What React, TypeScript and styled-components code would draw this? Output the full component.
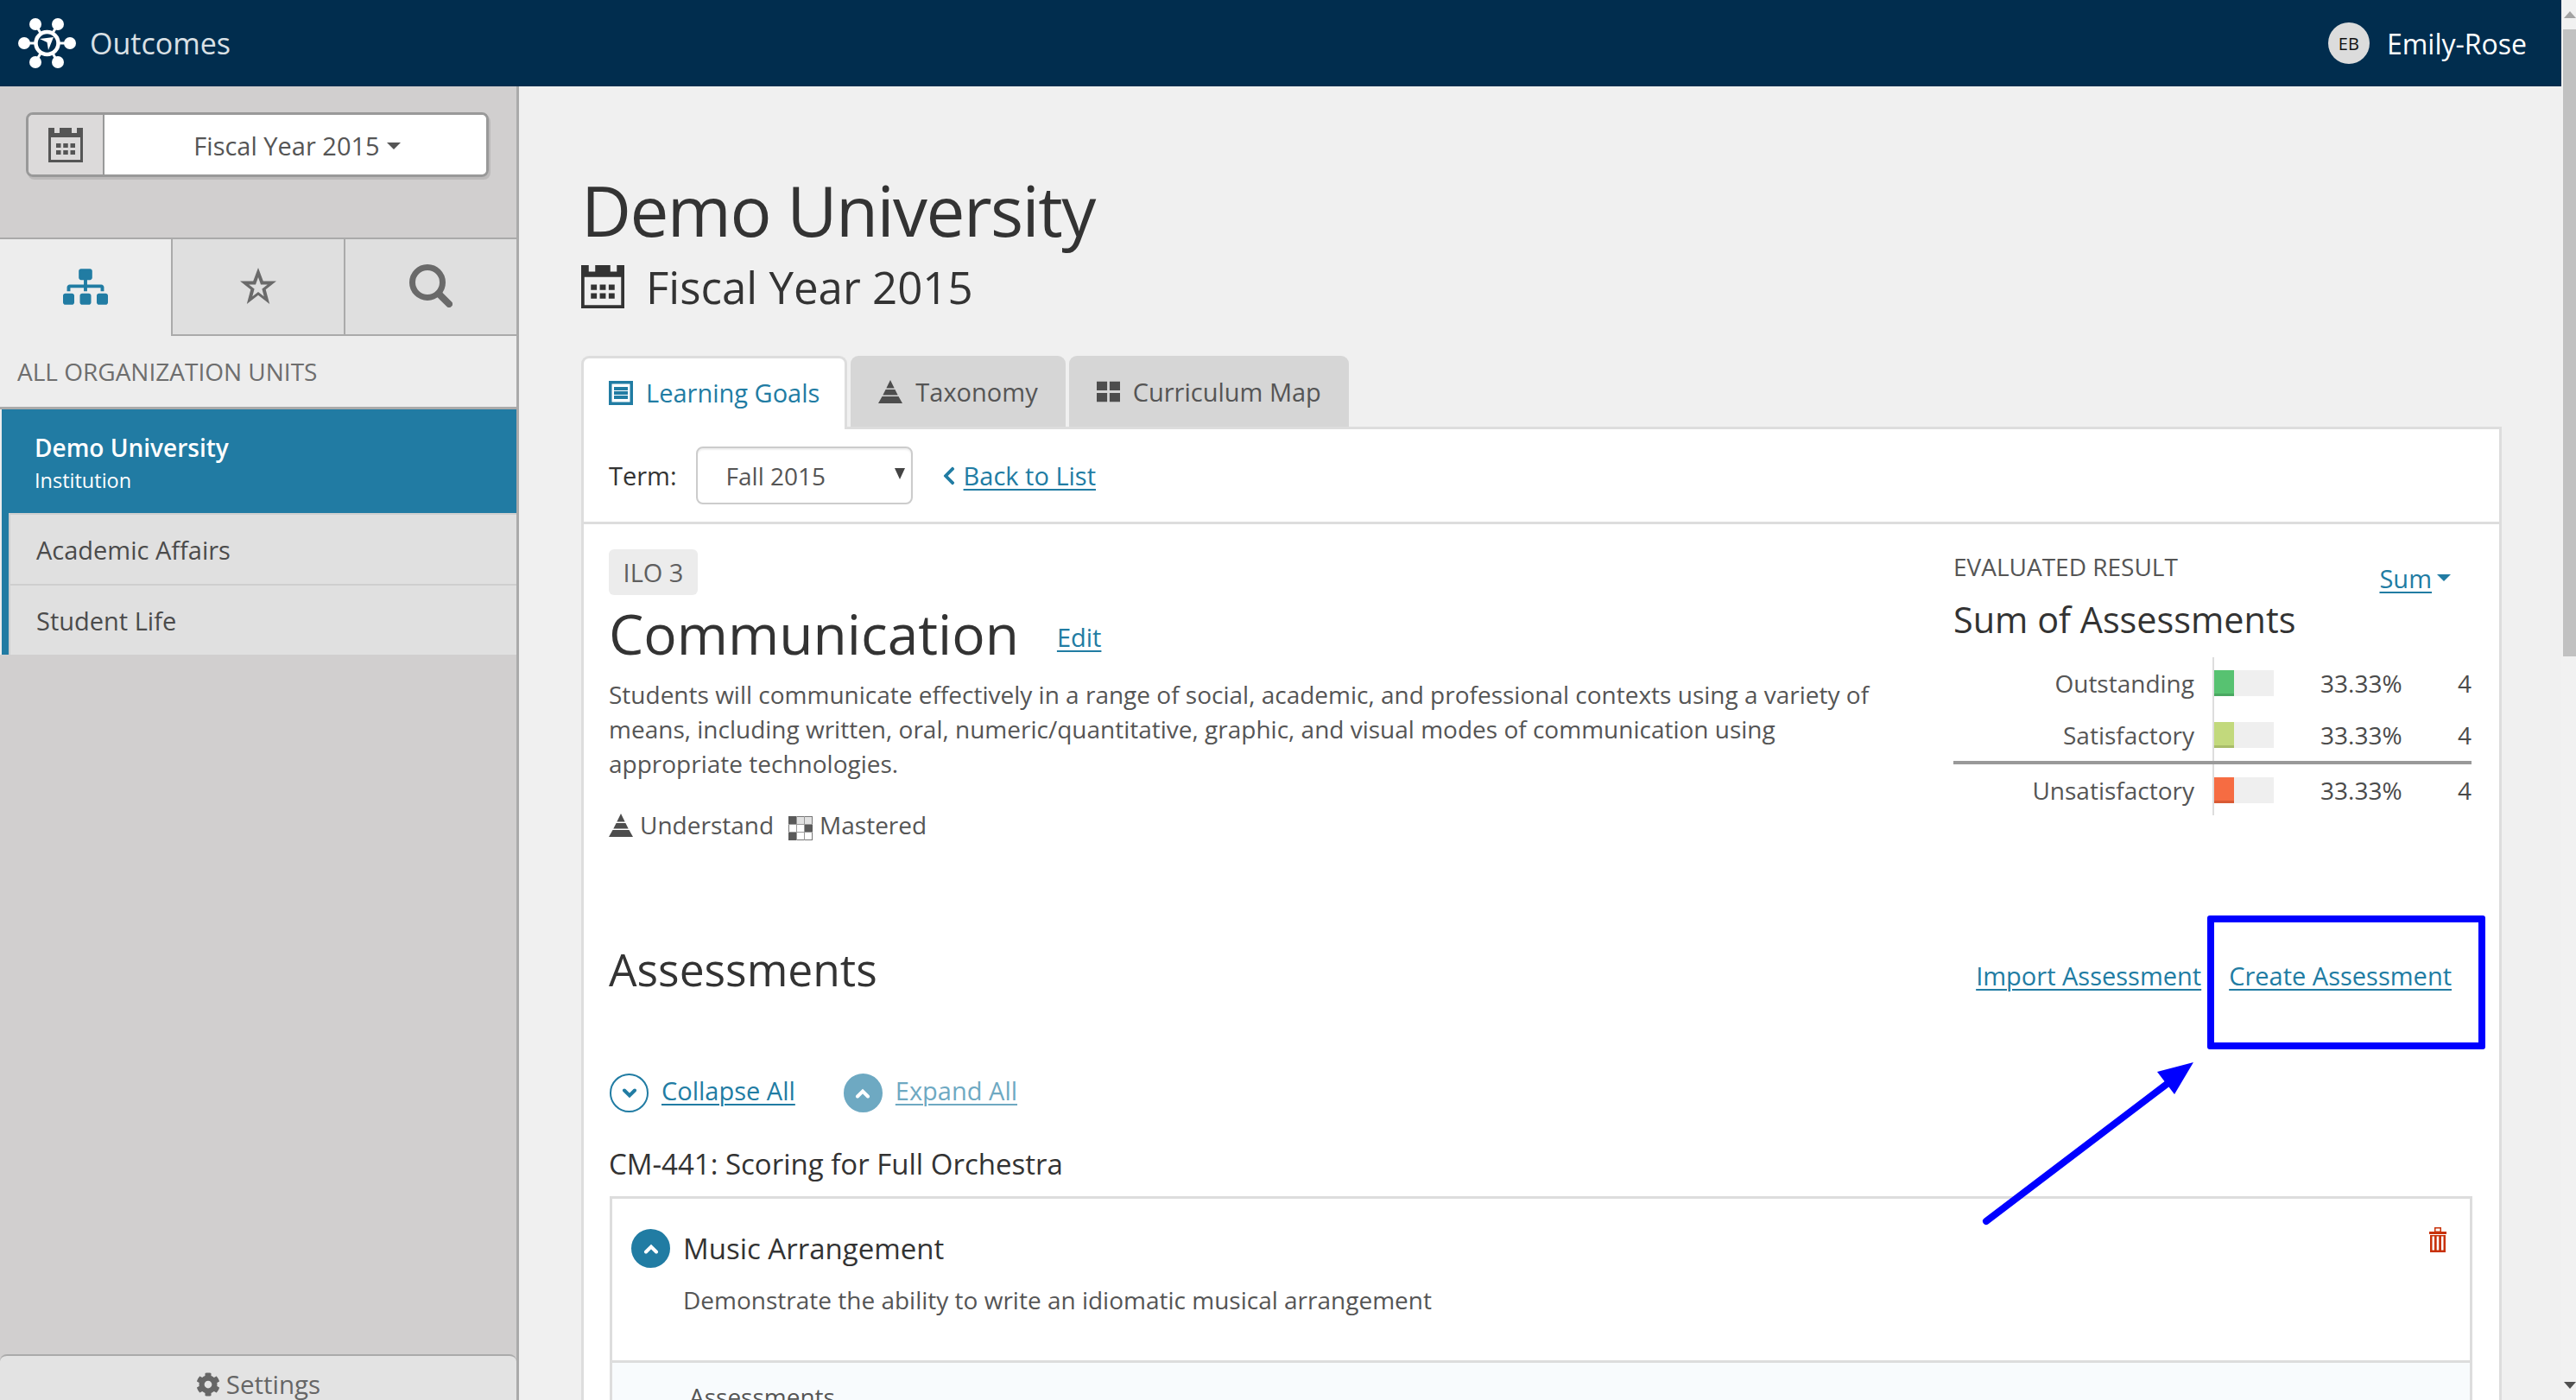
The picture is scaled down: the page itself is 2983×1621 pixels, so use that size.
import React from "react";
import styled, { createGlobalStyle } from "styled-components";
import { FaChevronLeft, FaCog, FaSitemap } from "react-icons/fa";

const LINK = "#217ca3";

const GlobalStyle = createGlobalStyle`
  html, body { margin: 0; padding: 0; overflow: hidden; background: #f0f0f0; }
  body { font-family: "Open Sans", "Noto Sans", sans-serif; color: #555; }
  * { box-sizing: border-box; }
`;

const Root = styled.div`
  position: relative;
  display: flex;
  width: 2983px;
  height: 1621px;
  overflow: hidden;
`;
const Page = styled.div`
  display: flex;
  flex-direction: column;
  flex: 1;
  min-width: 0;
`;
const TopBar = styled.header`
  display: flex;
  align-items: center;
  justify-content: space-between;
  flex: 0 0 100px;
  padding: 0 40px 0 20px;
  background: #012d4e;
`;
const Brand = styled.div`
  display: flex;
  align-items: center;
  gap: 16px;
  font-size: 34px;
  color: #d9e0e5;
`;
const UserBox = styled.div`
  display: flex;
  align-items: center;
  gap: 20px;
  font-size: 32px;
  color: #fff;
`;
const Avatar = styled.span`
  display: flex;
  align-items: center;
  justify-content: center;
  width: 48px;
  height: 48px;
  border-radius: 50%;
  background: #dcdcdc;
  color: #111;
  font-size: 20px;
  font-weight: 500;
`;
const Body = styled.div`
  display: flex;
  flex: 1;
  min-height: 0;
`;

const Sidebar = styled.aside`
  display: flex;
  flex-direction: column;
  flex: 0 0 601px;
  background: #d1cfcf;
  border-right: 3px solid #aaa;
`;
const Picker = styled.div`
  display: flex;
  height: 75px;
  margin: 30px 32px 70px 30px;
  border: 3px solid #999;
  border-radius: 8px;
  box-shadow: 2px 3px 0 #bcbaba;
  overflow: hidden;
`;
const PickerIcon = styled.div`
  display: flex;
  align-items: center;
  justify-content: center;
  flex: 0 0 88px;
  background: #dcdada;
  border-right: 2px solid #999;
  color: #555;
`;
const PickerValue = styled.div`
  display: flex;
  align-items: center;
  justify-content: center;
  flex: 1;
  gap: 8px;
  padding: 2px 0 0 4px;
  background: #fff;
  font-size: 29px;
  color: #555;
`;
const Caret = styled.span<{ $color?: string }>`
  display: inline-block;
  width: 0;
  height: 0;
  border-left: 8px solid transparent;
  border-right: 8px solid transparent;
  border-top: 8px solid ${(p) => p.$color || "#555"};
`;
const NavTabs = styled.div`
  display: flex;
  height: 114px;
  border-top: 2px solid #aaa;
`;
const NavTab = styled.div<{ $active?: boolean }>`
  display: flex;
  align-items: center;
  justify-content: center;
  width: 200px;
  padding-bottom: 2px;
  background: ${(p) => (p.$active ? "#ededed" : "#dfdfdf")};
  border-bottom: ${(p) => (p.$active ? "none" : "2px solid #aaa")};
  border-left: ${(p) => (p.$active ? "none" : "2px solid #aaa")};
  color: ${(p) => (p.$active ? LINK : "#6a6a6a")};
  &:first-child { width: 198px; }
`;
const UnitsLabel = styled.div`
  display: flex;
  align-items: center;
  height: 85px;
  padding-left: 20px;
  background: #ededed;
  border-bottom: 3px solid #aaa;
  font-size: 28px;
  color: #6e6e6e;
`;
const UnitList = styled.div`
  padding-left: 2px;
  background: #ededed;
`;
const ActiveUnit = styled.div`
  height: 120px;
  padding: 24px 0 0 38px;
  background: #217ba3;
  color: #fff;
`;
const UnitName = styled.div`
  font-size: 28px;
  line-height: 40px;
  font-weight: 600;
`;
const UnitType = styled.div`
  font-size: 23.5px;
  line-height: 37px;
`;
const ChildUnits = styled.div`
  padding-left: 8px;
  background: #217ba3;
`;
const ChildUnit = styled.div`
  display: flex;
  align-items: center;
  height: 82px;
  padding-left: 30px;
  background: #e0e0e0;
  border-left: 2px solid #cfcfcf;
  border-top: 2px solid #cfcfcf;
  font-size: 29px;
  color: #4b4b4b;
`;
const SettingsBar = styled.div`
  display: flex;
  align-items: center;
  justify-content: center;
  gap: 7px;
  height: 53px;
  margin-top: auto;
  padding: 14px 0 0 0;
  border-top: 2px solid #aaa;
  background: #e3e3e3;
  border-radius: 8px 8px 0 0;
  font-size: 29.500px;
  color: #666;
`;

const Main = styled.main`
  flex: 1;
  min-width: 0;
  padding: 95px 69px 0 72px;
  background: #f0f0f0;
`;
const Title = styled.h1`
  margin: 0 0 11px;
  font-size: 80px;
  line-height: 96px;
  font-weight: 500;
  color: #333;
  letter-spacing: -1.55px;
`;
const SubTitle = styled.div`
  display: flex;
  align-items: center;
  gap: 25px;
  height: 60px;
  margin-bottom: 50px;
  font-size: 51px;
  color: #333;
`;
const Tabs = styled.div`
  display: flex;
  gap: 4px;
  height: 82px;
`;
const Tab = styled.div<{ $active?: boolean }>`
  display: flex;
  align-items: center;
  gap: 15px;
  padding: 0 ${(p) => (p.$active ? "29px" : "32px")};
  padding-bottom: ${(p) => (p.$active ? "3px" : "0")};
  margin-bottom: ${(p) => (p.$active ? "-3px" : "0")};
  background: ${(p) => (p.$active ? "#fff" : "#d6d6d6")};
  border: ${(p) => (p.$active ? "3px solid #ddd" : "none")};
  border-bottom: none;
  border-radius: 9px 9px 0 0;
  font-size: 29px;
  color: ${(p) => (p.$active ? LINK : "#555")};
  z-index: 1;
`;
const Panel = styled.section`
  background: #fff;
  border: 3px solid #ddd;
  border-bottom: none;
  height: 1200px;
`;
const TermRow = styled.div`
  display: flex;
  align-items: center;
  height: 110px;
  padding-left: 29px;
  border-bottom: 3px solid #ddd;
  font-size: 29px;
`;
const TermLabel = styled.span`
  color: #333;
  margin-right: 22px;
`;
const TermSelect = styled.div`
  display: flex;
  align-items: center;
  justify-content: space-between;
  width: 251px;
  height: 67px;
  padding: 0 7px 0 33px;
  margin-right: 30px;
  border: 2px solid #ccc;
  border-radius: 8px;
  box-shadow: inset 0 2px 2px #eee;
  font-size: 28px;
  color: #555;
`;
const SelectArrow = styled.span`
  width: 0;
  height: 0;
  margin-bottom: 4px;
  border-left: 6px solid transparent;
  border-right: 6px solid transparent;
  border-top: 13px solid #444;
`;
const TextLink = styled.a<{ $faded?: boolean }>`
  color: ${LINK};
  opacity: ${(p) => (p.$faded ? 0.65 : 1)};
  text-decoration: underline;
  text-decoration-thickness: 2px;
  text-underline-offset: 4px;
  font-size: 29px;
  cursor: pointer;
`;
const BackLink = styled.div`
  display: flex;
  align-items: center;
  gap: 5px;
  color: ${LINK};
`;
const Overview = styled.div`
  display: flex;
  justify-content: space-between;
  padding: 29px 32px 0 29px;
  height: 484px;
`;
const GoalCol = styled.div`
  width: 1475px;
`;
const Badge = styled.div`
  display: flex;
  align-items: center;
  justify-content: center;
  width: 103px;
  height: 53px;
  margin-bottom: 9px;
  border-radius: 6px;
  background: #ececec;
  font-size: 29px;
  color: #5f5f5f;
`;
const GoalHead = styled.div`
  display: flex;
  align-items: center;
  gap: 44px;
`;
const GoalTitle = styled.h2`
  margin: 0;
  font-size: 64px;
  line-height: 72px;
  font-weight: 400;
  color: #333;
`;
const EditLink = styled.span`
  margin-top: 12px;
  line-height: 40px;
`;
const GoalText = styled.p`
  margin: 14px 0 31px;
  font-size: 28px;
  line-height: 40px;
  color: #555;
`;
const Levels = styled.div`
  display: flex;
  align-items: center;
  height: 40px;
  font-size: 28px;
  color: #555;
`;
const Level = styled.span`
  display: flex;
  align-items: center;
  gap: 8px;
  margin-right: 17px;
`;
const ResultCol = styled.div`
  width: 600px;
  margin-top: 3px;
`;
const ResultTop = styled.div`
  display: flex;
  justify-content: space-between;
  height: 53px;
  padding-right: 24px;
`;
const ResultLabel = styled.div`
  font-size: 28px;
  line-height: 34px;
  color: #555;
`;
const SumLink = styled.div`
  display: flex;
  align-items: center;
  gap: 6px;
  height: 40px;
  margin-top: 10px;
`;
const ResultTitle = styled.h3`
  margin: 0 0 19px;
  font-size: 41.400px;
  line-height: 50px;
  font-weight: 500;
  color: #333;
`;
const ResultRow = styled.div<{ $rule?: boolean; $h: number }>`
  display: flex;
  height: ${(p) => p.$h}px;
  border-top: ${(p) => (p.$rule ? "4px solid #999" : "none")};
  font-size: 28px;
  color: #555;
`;
const RowLabel = styled.div`
  display: flex;
  align-items: center;
  justify-content: flex-end;
  width: 279px;
  margin-right: 21px;
`;
const BarCell = styled.div`
  display: flex;
  align-items: center;
  width: 125px;
  border-left: 2px solid #ddd;
`;
const BarTrack = styled.div`
  width: 69px;
  height: 30px;
  background: #efefef;
`;
const BarFill = styled.div<{ $color: string; $edge: string }>`
  height: 100%;
  background: ${(p) => p.$color};
  border-bottom: 3px solid ${(p) => p.$edge};
`;
const RowPct = styled.div`
  display: flex;
  align-items: center;
  width: 95px;
  color: #4a4a4a;
`;
const RowCount = styled.div`
  display: flex;
  align-items: center;
  justify-content: flex-end;
  flex: 1;
  color: #4a4a4a;
`;
const AssessHead = styled.div`
  display: flex;
  align-items: center;
  justify-content: space-between;
  padding: 0 55px 0 29px;
`;
const AssessTitle = styled.h2`
  margin: 0;
  font-size: 51.500px;
  line-height: 62px;
  font-weight: 400;
  color: #333;
`;
const AssessLinks = styled.div`
  display: flex;
  gap: 32px;
  margin-top: 14px;
`;
const ToggleRow = styled.div`
  display: flex;
  align-items: center;
  height: 45px;
  margin: 90px 0 40px 30px;
`;
const ToggleItem = styled.div`
  display: flex;
  align-items: center;
  gap: 15px;
  margin-right: 56px;
`;
const ToggleText = styled.span`
  margin-bottom: 6px;
`;
const Round = styled.span<{ $outline?: boolean; $faded?: boolean }>`
  display: flex;
  align-items: center;
  justify-content: center;
  flex: 0 0 45px;
  width: 45px;
  height: 45px;
  border-radius: 50%;
  border: 2px solid ${LINK};
  background: ${(p) => (p.$outline ? "#fff" : LINK)};
  color: ${(p) => (p.$outline ? LINK : "#fff")};
  opacity: ${(p) => (p.$faded ? 0.65 : 1)};
`;
const CourseName = styled.div`
  margin: 0 0 17px 29px;
  font-size: 33px;
  line-height: 40px;
  color: #333;
`;
const Card = styled.div`
  margin: 0 31px 0 30px;
  border: 3px solid #ddd;
  border-bottom: none;
`;
const CardHead = styled.div`
  height: 190px;
  padding: 35px 27px 0 22px;
  border-bottom: 3px solid #ddd;
`;
const CardTitleRow = styled.div`
  display: flex;
  align-items: center;
  gap: 15px;
  height: 45px;
`;
const CardTitle = styled.div`
  flex: 1;
  font-size: 33px;
  color: #333;
`;
const CardText = styled.div`
  margin: 17px 0 0 60px;
  font-size: 28px;
  line-height: 40px;
  color: #555;
`;
const CardBody = styled.div`
  height: 200px;
  padding: 19px 0 0 89px;
  background: #f8fbfd;
  font-size: 28px;
  line-height: 40px;
  color: #555;
`;

const Scrollbar = styled.div`
  display: flex;
  flex-direction: column;
  align-items: flex-end;
  flex: 0 0 17px;
  background: #f1f1f1;
  position: relative;
`;
const ScrollArrow = styled.span<{ $down?: boolean }>`
  position: absolute;
  left: 3px;
  ${(p) => (p.$down ? "bottom: 13px;" : "top: 13px;")}
  width: 0;
  height: 0;
  border-left: 7px solid transparent;
  border-right: 7px solid transparent;
  ${(p) => (p.$down ? "border-top: 8px solid #505050;" : "border-bottom: 8px solid #a3a3a3;")}
`;
const ScrollThumb = styled.div`
  width: 15px;
  height: 726px;
  margin-top: 34px;
  background: #c1c1c1;
`;

const Highlight = styled.div`
  position: absolute;
  left: 2556px;
  top: 1060px;
  width: 322px;
  height: 155px;
  border: 8px solid #0000ff;
  border-radius: 3px;
`;
const ArrowMark = styled.svg`
  position: absolute;
  left: 2290px;
  top: 1220px;
`;
const TrashSvg = styled.svg`
  align-self: flex-start;
  margin-top: -2px;
`;
const CheckerSvg = styled.svg`
  margin-top: 8px;
`;

const CalendarIcon = ({ size, color }: { size: number; color: string }) => (
  <svg width={size} height={size} viewBox="0 0 40 40">
    <path
      fill={color}
      fillRule="evenodd"
      d="M0 0h40v40h-40zM7 0v6h6v-6zM27 0v6h6v-6zM3 11v26h34v-26z"
    />
    <path
      fill={color}
      d="M9 18h5.500v5h-5.500zM17.250 18h5.500v5h-5.500zM25.500 18h5.500v5h-5.500zM9 26h5.500v5h-5.500zM17.250 26h5.500v5h-5.500zM25.500 26h5.500v5h-5.500z"
    />
  </svg>
);

const Logo = () => (
  <svg width="68" height="60" viewBox="0 0 68 60">
    <g stroke="#fff" strokeWidth="3">
      <path d="M8 30h14M47 30h14M21 8l7 12M47 8l-7 12M21 52l7-12M47 52l-7-12" />
      <circle cx="34.500" cy="30" r="13" fill="none" strokeWidth="4.500" />
    </g>
    <g fill="#fff">
      <circle cx="8" cy="30" r="7" />
      <circle cx="61" cy="30" r="7" />
      <circle cx="21" cy="8" r="7" />
      <circle cx="47" cy="8" r="7" />
      <circle cx="21" cy="52" r="7" />
      <circle cx="47" cy="52" r="7" />
      <path d="M26 25l16-2-6 15-1.500-9z" />
    </g>
  </svg>
);

const StarIcon = () => (
  <svg width="42" height="42" viewBox="0 0 42 42">
    <path
      fill="currentColor"
      fillRule="evenodd"
      d="M21 0l5.800 15.600h15.200l-12.300 9.600 4.500 16.800-13.200-10.300-13.200 10.300 4.500-16.800-12.300-9.600h15.200zM21 11l-3 8.500h-7.800l6.400 5-2.300 8.700 6.700-5.200 6.700 5.200-2.300-8.700 6.400-5h-7.800z"
    />
  </svg>
);

const SearchIcon = () => (
  <svg width="50" height="50" viewBox="0 0 50 50">
    <circle cx="21" cy="21" r="17.500" fill="none" stroke="currentColor" strokeWidth="7" />
    <path d="M34 34l12 12" stroke="currentColor" strokeWidth="8" strokeLinecap="round" />
  </svg>
);

const GoalsIcon = () => (
  <svg width="28" height="28" viewBox="0 0 28 28">
    <path
      fill={LINK}
      fillRule="evenodd"
      d="M0 0h28v28h-28zM3.500 3.500v21h21v-21zM6 7h16v4h-16zM6 12h16v4h-16zM6 17h16v4h-16z"
    />
  </svg>
);

const PyramidIcon = () => (
  <svg width="28" height="27" viewBox="0 0 28 27">
    <path
      fill="#4d4d4d"
      d="M14 0l4.700 9.500h-9.400zM8.600 11h10.800l3.300 6.500h-17.400zM4.500 19h19l4.500 8h-28z"
    />
  </svg>
);

const GridIcon = () => (
  <svg width="27" height="25" viewBox="0 0 29 25">
    <path fill="#4d4d4d" d="M0 0h13v11h-13zM16 0h13v11h-13zM0 14h13v11h-13zM16 14h13v11h-13z" />
  </svg>
);

const MasteredIcon = () => (
  <CheckerSvg width="28" height="28" viewBox="0 0 28 28">
    <rect x="0.500" y="0.500" width="27" height="27" fill="#fff" stroke="#777" strokeWidth="1" />
    <path fill="#e2e2e2" d="M10 1h8v8h-8zM19 1h8v8h-8z" />
    <path fill="#5a5a5a" d="M0 0h9v9h-9zM18 9h10v10h-10zM0 18h9v10h-9z" />
    <path stroke="#999" strokeWidth="1" fill="none" d="M9.500 0v28M18.500 0v28M0 9.500h28M0 18.500h28" />
  </CheckerSvg>
);

const TrashIcon = () => (
  <TrashSvg width="20" height="29" viewBox="0 0 20 29">
    <path
      fill="#c8320a"
      fillRule="evenodd"
      d="M0 5h6v-5h8v5h6v3h-20zM7.500 1.500v3h5v-3zM1 9h18v20h-18zM3.500 10.500v16h2.500v-16zM8.700 10.500v16h2.500v-16zM14 10.500v16h2.500v-16z"
    />
  </TrashSvg>
);

const Chevron = ({ up }: { up?: boolean }) => (
  <svg width="18" height="12" viewBox="0 0 18 12">
    <path
      d={up ? "M3 9.500l6-6 6 6" : "M3 2.500l6 6 6-6"}
      fill="none"
      stroke="currentColor"
      strokeWidth="4"
      strokeLinecap="round"
    />
  </svg>
);

const results = [
  { label: "Outstanding", color: "#57c271", edge: "#4aa861", h: 60 },
  { label: "Satisfactory", color: "#c2d97c", edge: "#a9bd69", h: 60 },
  { label: "Unsatisfactory", color: "#f66c42", edge: "#d95a34", h: 63, rule: true },
];

const App = () => {
  return (
    <Root>
      <GlobalStyle />
      <Page>
        <TopBar>
          <Brand>
            <Logo />
            <span>Outcomes</span>
          </Brand>
          <UserBox>
            <Avatar>EB</Avatar>
            <span>Emily-Rose</span>
          </UserBox>
        </TopBar>
        <Body>
          <Sidebar>
            <Picker>
              <PickerIcon>
                <CalendarIcon size={40} color="#555" />
              </PickerIcon>
              <PickerValue>
                Fiscal Year 2015 <Caret />
              </PickerValue>
            </Picker>
            <NavTabs>
              <NavTab $active>
                <FaSitemap size={52} />
              </NavTab>
              <NavTab>
                <StarIcon />
              </NavTab>
              <NavTab>
                <SearchIcon />
              </NavTab>
            </NavTabs>
            <UnitsLabel>ALL ORGANIZATION UNITS</UnitsLabel>
            <UnitList>
              <ActiveUnit>
                <UnitName>Demo University</UnitName>
                <UnitType>Institution</UnitType>
              </ActiveUnit>
              <ChildUnits>
                <ChildUnit>Academic Affairs</ChildUnit>
                <ChildUnit>Student Life</ChildUnit>
              </ChildUnits>
            </UnitList>
            <SettingsBar>
              <FaCog size={28} />
              Settings
            </SettingsBar>
          </Sidebar>
          <Main>
            <Title>Demo University</Title>
            <SubTitle>
              <CalendarIcon size={50} color="#333" />
              Fiscal Year 2015
            </SubTitle>
            <Tabs>
              <Tab $active>
                <GoalsIcon />
                Learning Goals
              </Tab>
              <Tab>
                <PyramidIcon />
                Taxonomy
              </Tab>
              <Tab>
                <GridIcon />
                Curriculum Map
              </Tab>
            </Tabs>
            <Panel>
              <TermRow>
                <TermLabel>Term:</TermLabel>
                <TermSelect>
                  Fall 2015
                  <SelectArrow />
                </TermSelect>
                <BackLink>
                  <FaChevronLeft size={24} />
                  <TextLink>Back to List</TextLink>
                </BackLink>
              </TermRow>
              <Overview>
                <GoalCol>
                  <Badge>ILO 3</Badge>
                  <GoalHead>
                    <GoalTitle>Communication</GoalTitle>
                    <EditLink>
                      <TextLink>Edit</TextLink>
                    </EditLink>
                  </GoalHead>
                  <GoalText>
                    Students will communicate effectively in a range of social, academic, and
                    professional contexts using a variety of means, including written, oral,
                    numeric/quantitative, graphic, and visual modes of communication using
                    appropriate technologies.
                  </GoalText>
                  <Levels>
                    <Level>
                      <PyramidIcon />
                      Understand
                    </Level>
                    <Level>
                      <MasteredIcon />
                      Mastered
                    </Level>
                  </Levels>
                </GoalCol>
                <ResultCol>
                  <ResultTop>
                    <ResultLabel>EVALUATED RESULT</ResultLabel>
                    <SumLink>
                      <TextLink>Sum</TextLink>
                      <Caret $color={LINK} />
                    </SumLink>
                  </ResultTop>
                  <ResultTitle>Sum of Assessments</ResultTitle>
                  {results.map((r) => (
                    <ResultRow key={r.label} $h={r.h} $rule={r.rule}>
                      <RowLabel>{r.label}</RowLabel>
                      <BarCell>
                        <BarTrack>
                          <BarFill $color={r.color} $edge={r.edge} style={{ width: "33.33%" }} />
                        </BarTrack>
                      </BarCell>
                      <RowPct>33.33%</RowPct>
                      <RowCount>4</RowCount>
                    </ResultRow>
                  ))}
                </ResultCol>
              </Overview>
              <AssessHead>
                <AssessTitle>Assessments</AssessTitle>
                <AssessLinks>
                  <TextLink>Import Assessment</TextLink>
                  <TextLink>Create Assessment</TextLink>
                </AssessLinks>
              </AssessHead>
              <ToggleRow>
                <ToggleItem>
                  <Round $outline>
                    <Chevron />
                  </Round>
                  <ToggleText>
                    <TextLink>Collapse All</TextLink>
                  </ToggleText>
                </ToggleItem>
                <ToggleItem>
                  <Round $faded>
                    <Chevron up />
                  </Round>
                  <ToggleText>
                    <TextLink $faded>Expand All</TextLink>
                  </ToggleText>
                </ToggleItem>
              </ToggleRow>
              <CourseName>CM-441: Scoring for Full Orchestra</CourseName>
              <Card>
                <CardHead>
                  <CardTitleRow>
                    <Round>
                      <Chevron up />
                    </Round>
                    <CardTitle>Music Arrangement</CardTitle>
                    <TrashIcon />
                  </CardTitleRow>
                  <CardText>Demonstrate the ability to write an idiomatic musical arrangement</CardText>
                </CardHead>
                <CardBody>Assessments</CardBody>
              </Card>
            </Panel>
          </Main>
        </Body>
      </Page>
      <Scrollbar>
        <ScrollArrow />
        <ScrollThumb />
        <ScrollArrow $down />
      </Scrollbar>
      <Highlight />
      <ArrowMark width="260" height="205" viewBox="0 0 260 205">
        <path d="M10 194L226 30" stroke="#0000ff" strokeWidth="8" strokeLinecap="round" fill="none" />
        <path d="M250 10L208 21L228 47z" fill="#0000ff" />
      </ArrowMark>
    </Root>
  );
};

export default App;
